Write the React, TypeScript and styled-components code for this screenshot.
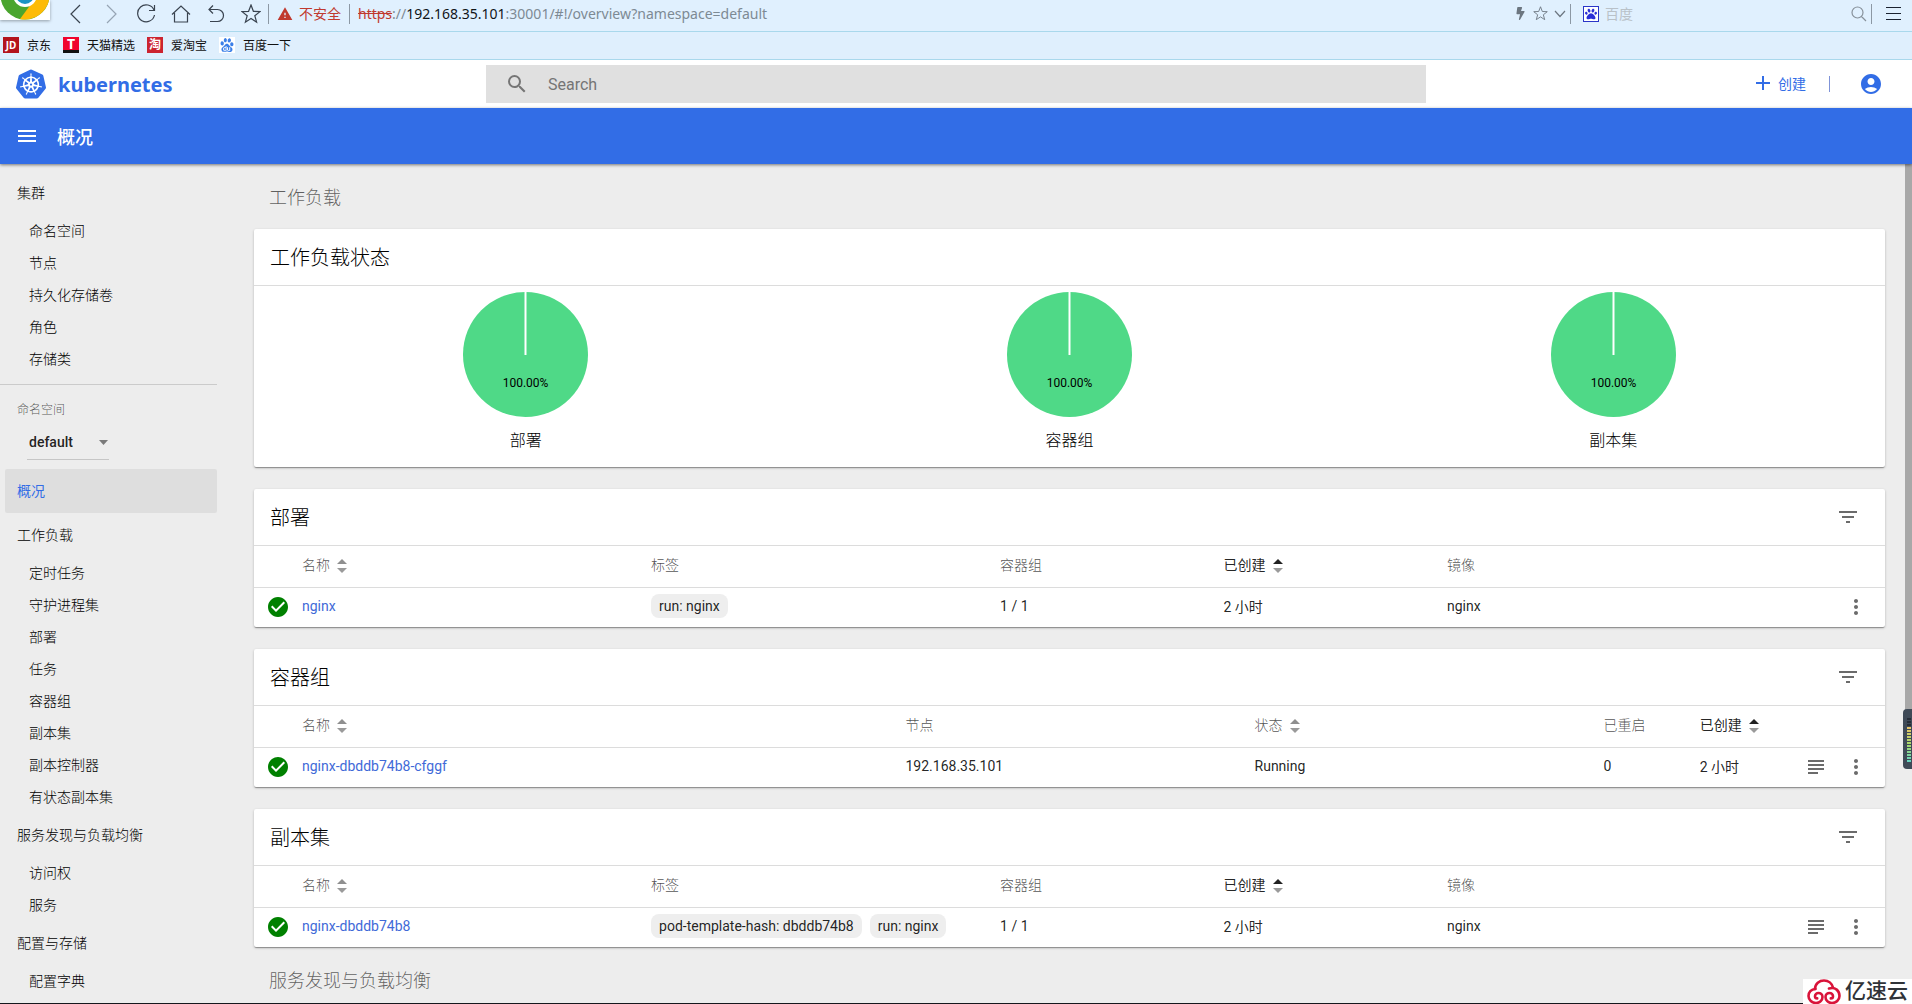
import React from 'react';
import styled, { createGlobalStyle, css } from 'styled-components';
import {
  MdAccountCircle,
  MdAdd,
  MdCheckCircle,
  MdFilterList,
  MdMenu,
  MdMoreVert,
  MdSearch,
  MdSubject,
  MdWarning,
} from 'react-icons/md';
import { SiBaidu, SiKubernetes } from 'react-icons/si';
import { FaBolt, FaPaw } from 'react-icons/fa';

const blue = '#326de6';
const uiFont = 'Roboto, "Noto Sans CJK SC", sans-serif';
const chromeFont = '"Noto Sans", "Noto Sans CJK SC", sans-serif';

const GlobalStyle = createGlobalStyle`
  * { box-sizing: border-box; }
  body { margin: 0; background: #ededed; font-family: ${uiFont}; font-size: 14px; color: rgba(0, 0, 0, 0.87); }
  button, input, select { font: inherit; color: inherit; margin: 0; padding: 0; border: 0; background: none; border-radius: 0; outline: none; }
  button { cursor: pointer; }
  a { color: inherit; text-decoration: none; }
  svg { display: block; flex: none; }
`;

const Page = styled.div`
  position: relative;
  display: flex;
  flex-direction: column;
  height: 100vh;
  overflow: hidden;
`;

/* ---------- browser frame ---------- */

const Toolbar = styled.div`
  display: flex;
  align-items: center;
  flex: none;
  height: 32px;
  padding-bottom: 4px;
  background: #e0f0fe;
  border-bottom: 1px solid #a9d8ec;
  font-family: ${chromeFont};
`;

const BrowserLogo = styled.div`
  align-self: flex-start;
  width: 50px;
  height: 20px;
  margin-right: 8px;
  background: #fff;
  box-shadow: 0 1px 3px rgba(0, 0, 0, 0.35);
`;

const NavButton = styled.button<{ $faded?: boolean }>`
  display: flex;
  align-items: center;
  justify-content: center;
  width: 35px;
  height: 24px;
  color: ${(p) => (p.$faded ? '#96a4b4' : '#39434f')};
`;

const Rule = styled.span`
  width: 1px;
  height: 20px;
  background: #8c98a4;
`;

const Security = styled.div`
  display: flex;
  align-items: center;
  gap: 6px;
  padding: 0 8px;
  color: #c0392f;
  font-size: 14px;
  line-height: 20px;
`;

const Address = styled.div`
  flex: 1;
  padding-left: 8px;
  color: #7d8a94;
  font-size: 14px;
  line-height: 20px;

  s { color: #c0392f; }
  b { color: #101418; font-weight: 400; }
`;

const SmallButton = styled.button`
  display: flex;
  align-items: center;
  justify-content: center;
  width: 20px;
  height: 24px;
  color: #6c7680;
`;

const EngineSearch = styled.label`
  display: flex;
  align-items: center;
  gap: 6px;
  width: 300px;
  padding: 0 4px 0 12px;
  color: #87919b;

  input {
    flex: 1;
    min-width: 0;
    height: 24px;
    font-size: 14px;
  }
  input::placeholder { color: #b9c1c8; opacity: 1; }
`;

const EngineIcon = styled.span`
  display: flex;
  align-items: center;
  justify-content: center;
  width: 16px;
  height: 16px;
  border: 1px solid #2b35c8;
  background: #fff;
  color: #2b2fd6;
`;

const MenuButton = styled(NavButton)`
  width: 40px;
  padding-left: 4px;
  color: #1a2230;
`;

const Bookmarks = styled.nav`
  display: flex;
  align-items: center;
  gap: 12px;
  flex: none;
  height: 28px;
  padding: 0 0 1px 3px;
  background: #dfeffd;
  border-bottom: 1px solid #a9d8ec;
  font-family: ${chromeFont};
  font-size: 12px;
`;

const Bookmark = styled.a`
  display: flex;
  align-items: center;
  gap: 8px;
  color: #111;
`;

const Favicon = styled.span<{ $bg: string; $size: number; $foot?: boolean }>`
  display: flex;
  align-items: center;
  justify-content: center;
  width: 16px;
  height: 16px;
  background: ${(p) => p.$bg};
  border-bottom: ${(p) => (p.$foot ? '3px solid #111' : '0')};
  color: #fff;
  font-size: ${(p) => p.$size}px;
  font-weight: 700;
  line-height: 1;
`;

/* ---------- dashboard header ---------- */

const Header = styled.header`
  display: grid;
  grid-template-columns: 1fr 2fr 1fr;
  align-items: center;
  flex: none;
  height: 48px;
  padding: 0 16px;
  background: #fff;
`;

const Brand = styled.a`
  display: flex;
  align-items: center;
  gap: 12px;
  color: ${blue};
  font-family: "Noto Sans", sans-serif;
  font-size: 20px;
  font-weight: 700;
`;

const SearchBox = styled.label`
  display: flex;
  align-items: center;
  gap: 19px;
  height: 38px;
  padding: 0 19px;
  background: #e0e0e0;
  color: #757575;

  input {
    flex: 1;
    font-size: 16px;
  }
  input::placeholder { color: #757575; opacity: 1; }
`;

const Actions = styled.div`
  display: flex;
  align-items: center;
  justify-content: flex-end;
  padding-right: 13px;
  color: ${blue};
`;

const CreateButton = styled.button`
  display: flex;
  align-items: center;
  gap: 3px;
  padding-bottom: 2px;
  font-size: 14px;
`;

const ActionRule = styled.span`
  width: 1px;
  height: 16px;
  margin: 0 29px 0 23px;
  background: #7f93d8;
`;

const IconButton = styled.button`
  display: flex;
  align-items: center;
  justify-content: center;
  width: 24px;
  height: 24px;
  color: inherit;
`;

const TitleBar = styled.div`
  position: relative;
  display: flex;
  align-items: center;
  gap: 18px;
  flex: none;
  height: 56px;
  padding: 0 15px;
  background: ${blue};
  color: #fff;
  box-shadow: 0 1px 3px rgba(0, 0, 0, 0.5);

  h1 {
    margin: 0;
    padding-top: 3px;
    font-size: 18px;
    font-weight: 500;
    line-height: 24px;
  }
`;

/* ---------- side navigation ---------- */

const Body = styled.div`
  display: flex;
  flex: 1;
  min-height: 0;
  overflow: hidden;
`;

const Sidebar = styled.nav`
  flex: none;
  width: 217px;
  padding-top: 7px;
  color: #000;
  font-weight: 300;
`;

const GroupLink = styled.a<{ $active?: boolean }>`
  display: block;
  margin-left: 5px;
  padding-left: 12px;
  border-radius: 2px;
  line-height: 44px;
  ${(p) =>
    p.$active &&
    css`
      background: #dedede;
      color: ${blue};
      font-weight: 400;
    `}
`;

const ItemLink = styled.a`
  display: block;
  padding-left: 29px;
  line-height: 32px;
`;

const NamespaceBlock = styled.div`
  display: flex;
  flex-direction: column;
  align-items: flex-start;
  margin-top: 9px;
  padding: 15px 0 9px 17px;
  border-top: 1px solid #cbcbcb;

  label {
    color: rgba(0, 0, 0, 0.66);
    font-size: 12px;
    line-height: 20px;
  }
`;

const SelectBox = styled.div`
  position: relative;
  width: 82px;
  margin: 7px 0 0 10px;
  border-bottom: 1px solid #c6c6c6;

  select {
    appearance: none;
    width: 100%;
    height: 32px;
    padding: 0 0 2px 2px;
    color: rgba(0, 0, 0, 0.87);
    font-weight: 500;
  }
  svg {
    position: absolute;
    right: 1px;
    top: 13px;
    pointer-events: none;
  }
`;

/* ---------- content ---------- */

const Main = styled.main`
  flex: 1;
  min-width: 0;
  padding: 0 20px 0 37px;
`;

const SectionTitle = styled.h2`
  margin: 0;
  padding: 3px 0 0 15px;
  color: rgba(0, 0, 0, 0.6);
  font-size: 18px;
  font-weight: 300;
  line-height: 62px;
`;

const CardStack = styled.div`
  display: flex;
  flex-direction: column;
  gap: 22px;
`;

const Card = styled.section`
  background: #fff;
  border-radius: 2px;
  box-shadow: 0 1px 3px rgba(0, 0, 0, 0.2), 0 1px 1px rgba(0, 0, 0, 0.14), 0 2px 1px -1px rgba(0, 0, 0, 0.2);
`;

const CardHeader = styled.div`
  display: flex;
  align-items: center;
  justify-content: space-between;
  height: 57px;
  padding: 0 25px 0 16px;
  border-bottom: 1px solid #dcdcdc;
  color: #6b6b6b;

  h3 {
    margin: 0;
    padding-top: 2px;
    color: #000;
    font-size: 20px;
    font-weight: 300;
    line-height: 28px;
  }
`;

const Charts = styled.div`
  display: grid;
  grid-template-columns: repeat(3, 1fr);
  padding: 6px 0 14px;
`;

const Chart = styled.figure`
  display: flex;
  flex-direction: column;
  align-items: center;
  gap: 12px;
  margin: 0;

  text {
    font-size: 12px;
    text-anchor: middle;
  }
  figcaption {
    color: #000;
    font-size: 16px;
    font-weight: 300;
    line-height: 24px;
  }
`;

const Table = styled.table`
  width: 100%;
  table-layout: fixed;
  border-collapse: collapse;

  th, td {
    padding: 0 0 2px;
    text-align: left;
    font-weight: 400;
  }
  th {
    height: 41px;
    padding-bottom: 4px;
    border-bottom: 1px solid #dcdcdc;
    color: rgba(0, 0, 0, 0.7);
    font-weight: 300;
  }
  td { height: 40px; }
`;

const SortButton = styled.button<{ $active?: boolean }>`
  display: flex;
  align-items: center;
  gap: 7px;
  color: ${(p) => (p.$active ? 'rgba(0, 0, 0, 0.87)' : 'inherit')};
  font-weight: ${(p) => (p.$active ? 400 : 300)};

  svg { margin-top: 4px; }
`;

const NameLink = styled.a`
  color: #3f6ad8;
`;

const Status = styled.span`
  display: block;
  padding: 2px 0 0 12px;
  color: #008000;
`;

const Chips = styled.div`
  display: flex;
  gap: 8px;
`;

const Chip = styled.span`
  padding: 0 8px;
  border-radius: 8px;
  background: #eeeeee;
  line-height: 24px;
  white-space: nowrap;
`;

const RowButton = styled(IconButton)`
  width: 40px;
  height: 26px;
  padding-top: 2px;
  color: #6b6b6b;
`;

/* ---------- page edge ---------- */

const Rail = styled.div`
  flex: none;
  width: 7px;
`;

const Thumb = styled.div`
  height: 68%;
  background: #a8a8a8;
`;

const Monitor = styled.div`
  position: absolute;
  right: 0;
  top: 709px;
  width: 9px;
  height: 60px;
  padding: 8px 1px 6px 4px;
  border-radius: 4px 0 0 4px;
  background: #3f4a57;
`;

const Meter = styled.div`
  height: 100%;
  background:
    repeating-linear-gradient(#3f4a57 0 1px, transparent 1px 3px),
    linear-gradient(#262d38 0 22%, #e8c368 22%, #a6d96c 60%, #5fd3c8 100%);
`;

const StatusLine = styled.div`
  flex: none;
  height: 1px;
  background: #15171c;
`;

const Watermark = styled.div`
  position: absolute;
  right: 0;
  bottom: 0;
  display: flex;
  align-items: center;
  gap: 4px;
  width: 109px;
  height: 25px;
  padding-left: 4px;
  background: #fff;
  color: #303338;
  font-size: 21px;
  font-weight: 500;
  line-height: 25px;
  white-space: nowrap;
`;

/* ---------- drawings ---------- */

const stroke = { fill: 'none', stroke: 'currentColor', strokeWidth: 1.2 };
const starPath = 'M10 1 L12.4 7.3 L19 7.6 L13.8 11.7 L15.6 18.2 L10 14.5 L4.4 18.2 L6.2 11.7 L1 7.6 L7.6 7.3 Z';

const Star = ({ size }: { size: number }) => (
  <svg width={size} height={size} viewBox="0 0 20 20" {...stroke}>
    <path d={starPath} />
  </svg>
);

const ChromeBall = () => (
  <svg width="50" height="20" viewBox="0 0 50 20">
    <circle cx="25" cy="-5" r="24.5" fill="#4aa52e" />
    <path d="M34 0 L20 19 A24.5 24.5 0 0 0 49.5 -5 Z" fill="#fdbb06" />
    <circle cx="25" cy="-5" r="12" fill="#fff" />
    <circle cx="25" cy="-5" r="9" fill="#1b93c4" />
  </svg>
);

const SortArrows = ({ active }: { active?: boolean }) => (
  <svg width="10" height="14" viewBox="0 0 10 14">
    <path d="M0 5 L5 0 L10 5 Z" fill={active ? '#222' : '#8f8f8f'} />
    <path d="M0 9 L5 14 L10 9 Z" fill="#9a9a9a" />
  </svg>
);

const Pie = () => (
  <svg width="125" height="125" viewBox="0 0 125 125">
    <circle cx="62.5" cy="62.5" r="62.5" fill="#4fd987" />
    <path d="M62.5 0 V63" stroke="#fff" strokeWidth="2" />
    <text x="62.5" y="95">100.00%</text>
  </svg>
);

const CloudLogo = () => (
  <svg width="34" height="25" viewBox="0 0 34 25" fill="none" stroke="#d9143a" strokeWidth="2.6" strokeLinecap="round">
    <path d="M8 10 C8 4.5 12.5 1.5 17 1.5 C21.5 1.5 25 4.5 26 8.5" />
    <path d="M8.5 10 C4 10 1.5 13.5 1.5 17 C1.5 21 5 24 9 24 C13 24 15.5 21 15.5 18 C15.5 15.5 13.5 14 11.5 14 C9.5 14 8 15.5 8 17.2 C8 18.5 9 19.4 10.2 19.4" />
    <path d="M22 9.5 C28.5 7.5 32.5 12 32.5 17 C32.5 21 29 24 25 24 C21 24 18.5 21 18.5 18 C18.5 15.5 20.5 14 22.5 14 C24.5 14 26 15.5 26 17.2 C26 18.5 25 19.4 23.8 19.4" />
  </svg>
);

/* ---------- data ---------- */

const clusterItems = ['命名空间', '节点', '持久化存储卷', '角色', '存储类'];

const navGroups = [
  { title: '工作负载', items: ['定时任务', '守护进程集', '部署', '任务', '容器组', '副本集', '副本控制器', '有状态副本集'] },
  { title: '服务发现与负载均衡', items: ['访问权', '服务'] },
  { title: '配置与存储', items: ['配置字典'] },
];

type Column = { label: string; width?: string; sort?: 'idle' | 'active' };

const wide = '21.4%';
const medium = '13.7%';
const narrow = '5.9%';

const workloadColumns: Column[] = [
  { label: '名称', sort: 'idle' },
  { label: '标签', width: wide },
  { label: '容器组', width: medium },
  { label: '已创建', width: medium, sort: 'active' },
  { label: '镜像', width: wide },
];

const podColumns: Column[] = [
  { label: '名称', sort: 'idle' },
  { label: '节点', width: wide },
  { label: '状态', width: wide, sort: 'idle' },
  { label: '已重启', width: narrow },
  { label: '已创建', width: narrow, sort: 'active' },
];

const Tags = ({ values }: { values: string[] }) => (
  <Chips>
    {values.map((v) => (
      <Chip key={v}>{v}</Chip>
    ))}
  </Chips>
);

type ListProps = { title: string; columns: Column[]; name: string; cells: React.ReactNode[]; logs?: boolean };

const ResourceCard = ({ title, columns, name, cells, logs }: ListProps) => (
  <Card>
    <CardHeader>
      <h3>{title}</h3>
      <IconButton aria-label="筛选">
        <MdFilterList size={24} />
      </IconButton>
    </CardHeader>
    <Table>
      <colgroup>
        <col width="48" />
        {columns.map((c) => (
          <col key={c.label} width={c.width} />
        ))}
        <col width="40" />
        <col width="49" />
      </colgroup>
      <thead>
        <tr>
          <th />
          {columns.map((c) => (
            <th key={c.label} scope="col">
              {c.sort ? (
                <SortButton $active={c.sort === 'active'}>
                  {c.label}
                  <SortArrows active={c.sort === 'active'} />
                </SortButton>
              ) : (
                c.label
              )}
            </th>
          ))}
          <th />
          <th />
        </tr>
      </thead>
      <tbody>
        <tr>
          <td>
            <Status>
              <MdCheckCircle size={24} />
            </Status>
          </td>
          <td>
            <NameLink href="#">{name}</NameLink>
          </td>
          {cells.map((cell, i) => (
            <td key={i}>{cell}</td>
          ))}
          <td>
            {logs && (
              <RowButton aria-label="日志">
                <MdSubject size={24} />
              </RowButton>
            )}
          </td>
          <td>
            <RowButton aria-label="更多">
              <MdMoreVert size={24} />
            </RowButton>
          </td>
        </tr>
      </tbody>
    </Table>
  </Card>
);

const BrowserFrame = () => (
  <>
    <Toolbar>
      <BrowserLogo>
        <ChromeBall />
      </BrowserLogo>
      <NavButton aria-label="后退">
        <svg width="18" height="20" viewBox="0 0 18 20" {...stroke}><path d="M13 1 L4 10 L13 19" /></svg>
      </NavButton>
      <NavButton aria-label="前进" $faded>
        <svg width="18" height="20" viewBox="0 0 18 20" {...stroke}><path d="M5 1 L14 10 L5 19" /></svg>
      </NavButton>
      <NavButton aria-label="刷新">
        <svg width="20" height="20" viewBox="0 0 20 20" {...stroke}><path d="M18 6 A8.5 8.5 0 1 0 18.5 11 M18.5 1 V6.5 H13" /></svg>
      </NavButton>
      <NavButton aria-label="主页">
        <svg width="20" height="20" viewBox="0 0 20 20" {...stroke}><path d="M1 10.5 L10 2 L19 10.5 M3.5 9 V18 H16.5 V9" /></svg>
      </NavButton>
      <NavButton aria-label="恢复">
        <svg width="18" height="20" viewBox="0 0 18 20" {...stroke}><path d="M6 1.5 L2 5.5 L6 9.5 M2 5.5 H10.5 A6 6 0 0 1 10.5 17.5 H3" /></svg>
      </NavButton>
      <NavButton aria-label="收藏">
        <Star size={20} />
      </NavButton>
      <Rule />
      <Security>
        <MdWarning size={16} />
        不安全
      </Security>
      <Rule />
      <Address>
        <s>https</s>://<b>192.168.35.101</b>:30001/#!/overview?namespace=default
      </Address>
      <SmallButton aria-label="加速">
        <FaBolt size={13} />
      </SmallButton>
      <SmallButton aria-label="收藏网址">
        <Star size={15} />
      </SmallButton>
      <SmallButton aria-label="展开">
        <svg width="12" height="8" viewBox="0 0 12 8" {...stroke}><path d="M1 1 L6 6.5 L11 1" /></svg>
      </SmallButton>
      <Rule />
      <EngineSearch>
        <EngineIcon>
          <FaPaw size={12} />
        </EngineIcon>
        <input type="text" placeholder="百度" aria-label="百度" />
        <svg width="16" height="16" viewBox="0 0 16 16" {...stroke}><path d="M6.5 1 A5.5 5.5 0 1 0 6.5 12 A5.5 5.5 0 1 0 6.5 1 M10.5 10.5 L15 15" /></svg>
      </EngineSearch>
      <Rule />
      <MenuButton aria-label="菜单">
        <svg width="16" height="15" viewBox="0 0 16 15"><path d="M0 1.5 H15 M0 7.5 H15 M0 13.5 H15" stroke="currentColor" /></svg>
      </MenuButton>
    </Toolbar>
    <Bookmarks>
      <Bookmark href="#"><Favicon $bg="#b3141d" $size={10}>JD</Favicon>京东</Bookmark>
      <Bookmark href="#"><Favicon $bg="#f0042d" $size={14} $foot>T</Favicon>天猫精选</Bookmark>
      <Bookmark href="#"><Favicon $bg="#cc2430" $size={12}>淘</Favicon>爱淘宝</Bookmark>
      <Bookmark href="#">
        <Favicon $bg="#fff" $size={14}><SiBaidu size={14} color="#3b7fe8" /></Favicon>
        百度一下
      </Bookmark>
    </Bookmarks>
  </>
);

export default function App() {
  return (
    <Page>
      <GlobalStyle />
      <BrowserFrame />
      <Header>
        <Brand href="#">
          <SiKubernetes size={30} />
          kubernetes
        </Brand>
        <SearchBox>
          <MdSearch size={24} />
          <input type="search" placeholder="Search" aria-label="Search" />
        </SearchBox>
        <Actions>
          <CreateButton>
            <MdAdd size={24} />
            创建
          </CreateButton>
          <ActionRule />
          <IconButton aria-label="账户">
            <MdAccountCircle size={24} />
          </IconButton>
        </Actions>
      </Header>
      <TitleBar>
        <IconButton aria-label="导航">
          <MdMenu size={24} />
        </IconButton>
        <h1>概况</h1>
      </TitleBar>
      <Body>
        <Sidebar>
          <GroupLink href="#">集群</GroupLink>
          {clusterItems.map((item) => (
            <ItemLink key={item} href="#">{item}</ItemLink>
          ))}
          <NamespaceBlock>
            <label htmlFor="namespace">命名空间</label>
            <SelectBox>
              <select id="namespace" defaultValue="default">
                <option value="default">default</option>
              </select>
              <svg width="9" height="5" viewBox="0 0 9 5"><path d="M0 0 H9 L4.5 5 Z" fill="#7a7a7a" /></svg>
            </SelectBox>
          </NamespaceBlock>
          <GroupLink href="#" $active>概况</GroupLink>
          {navGroups.map((group) => (
            <React.Fragment key={group.title}>
              <GroupLink href="#">{group.title}</GroupLink>
              {group.items.map((item) => (
                <ItemLink key={item} href="#">{item}</ItemLink>
              ))}
            </React.Fragment>
          ))}
        </Sidebar>
        <Main>
          <SectionTitle>工作负载</SectionTitle>
          <CardStack>
            <Card>
              <CardHeader>
                <h3>工作负载状态</h3>
              </CardHeader>
              <Charts>
                {['部署', '容器组', '副本集'].map((label) => (
                  <Chart key={label}>
                    <Pie />
                    <figcaption>{label}</figcaption>
                  </Chart>
                ))}
              </Charts>
            </Card>
            <ResourceCard
              title="部署"
              columns={workloadColumns}
              name="nginx"
              cells={[<Tags values={['run: nginx']} />, '1 / 1', '2 小时', 'nginx']}
            />
            <ResourceCard
              title="容器组"
              columns={podColumns}
              name="nginx-dbddb74b8-cfggf"
              cells={['192.168.35.101', 'Running', '0', '2 小时']}
              logs
            />
            <ResourceCard
              title="副本集"
              columns={workloadColumns}
              name="nginx-dbddb74b8"
              cells={[<Tags values={['pod-template-hash: dbddb74b8', 'run: nginx']} />, '1 / 1', '2 小时', 'nginx']}
              logs
            />
          </CardStack>
          <SectionTitle>服务发现与负载均衡</SectionTitle>
        </Main>
        <Rail>
          <Thumb />
        </Rail>
      </Body>
      <StatusLine />
      <Monitor>
        <Meter />
      </Monitor>
      <Watermark>
        <CloudLogo />
        亿速云
      </Watermark>
    </Page>
  );
}
